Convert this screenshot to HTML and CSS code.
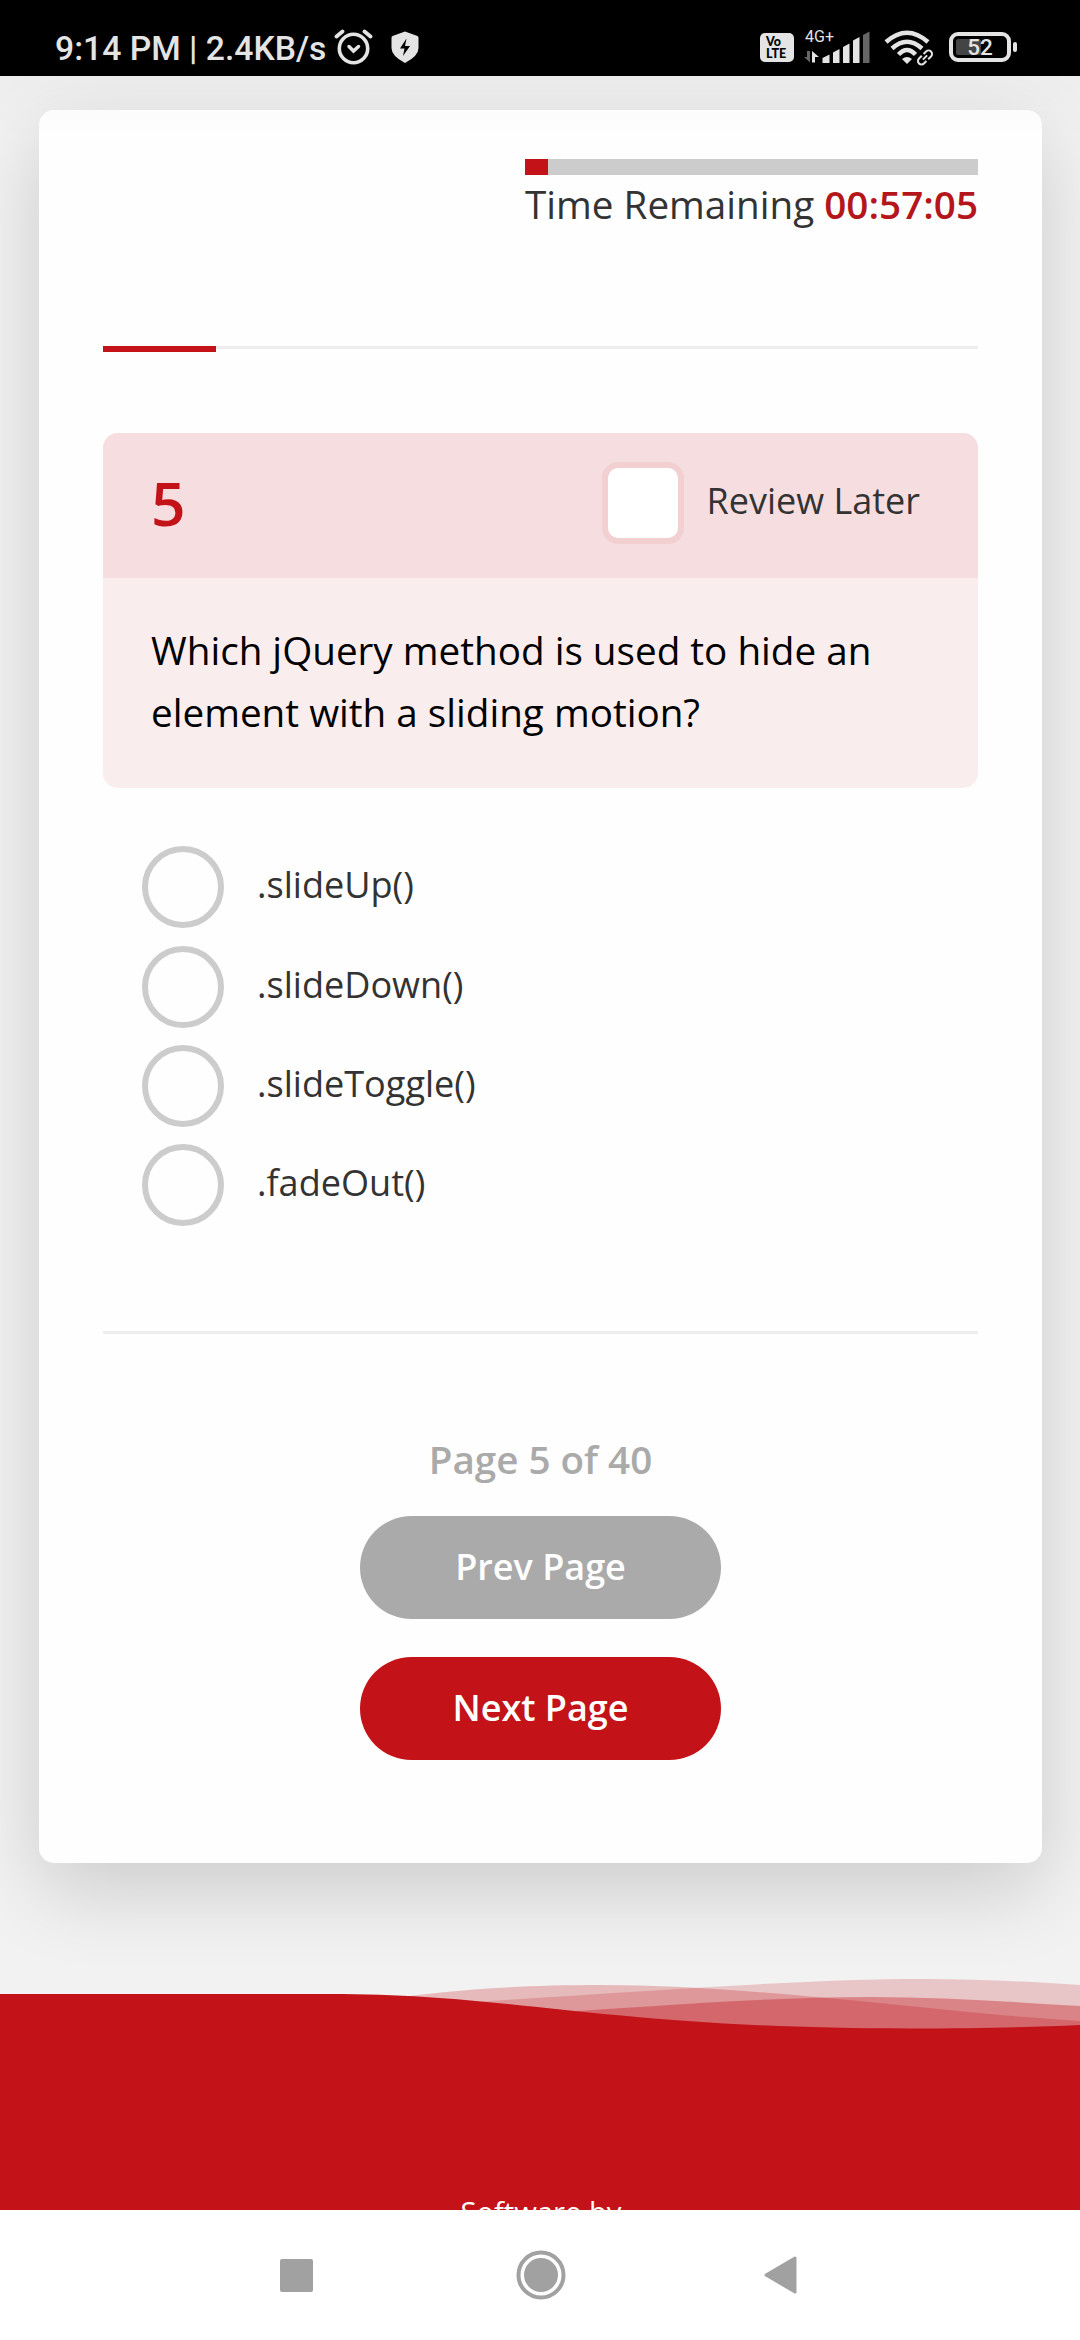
FILE: index.html
```html
<!DOCTYPE html>
<html lang="en">
<head>
<meta charset="utf-8">
<title>Quiz</title>
<link rel="stylesheet" href="styles.css">
</head>
<body>
<div class="screen">
  <header class="status">
    <span class="clock">9:14 PM | 2.4KB/s</span>
    <svg class="alarm" width="40" height="38" viewBox="0 0 40 38" fill="none" stroke="#e4e4e4" stroke-linecap="round">
      <circle cx="19.500" cy="19.500" r="14.200" stroke-width="3.600"/>
      <path d="M2.500 7.500L8.500 2.500M36.500 7.500L30.500 2.500" stroke-width="3.800"/>
      <path d="M15 17.500l4.500 4.500 5-4.500" stroke-width="3.500"/>
    </svg>
    <svg class="shield" width="28" height="33" viewBox="0 0 28 33">
      <path d="M14 .500L26.500 5Q27.500 5.500 27.500 7V17Q27.500 25 14 32Q.500 25 .500 17V7Q.500 5.500 1.500 5Z" fill="#e4e4e4"/>
      <path d="M15.500 7.500L9 17.500h4.500L12 25l7-10h-5Z" fill="#000"/>
    </svg>
    <span class="volte"><span>Vo</span><span>LTE</span></span>
    <span class="signal">
      <span class="net">4G+</span>
      <svg width="66" height="34" viewBox="0 0 66 34">
        <path d="M0 27l6 5.500V21H3v6Z" fill="#666"/>
        <path d="M8 21v11.500h3V27h4Z" fill="#e4e4e4"/>
        <path d="M18.500 33v-5l7-3.500V33ZM29 33V22.500l6.500-3.500V33ZM39 33V17l6.500-3.500V33ZM49 33V10.500L55.500 7V33Z" fill="#e4e4e4"/>
        <path d="M59 33V5l6.500-3.500V33Z" fill="#666"/>
      </svg>
    </span>
    <svg class="wifi" width="51" height="36" viewBox="0 0 51 36" fill="none" stroke="#e4e4e4">
      <path d="M2 12Q23-6.500 44 12" stroke-width="4.500"/>
      <path d="M8 18.500Q23 5 38 18.500" stroke-width="4.500"/>
      <path d="M14.500 24.500Q23 15.500 31.500 24.500" stroke-width="4.500"/>
      <path d="M18 29Q23 25 28 29L23 34Z" fill="#e4e4e4" stroke="none"/>
      <g transform="rotate(-45 41 27.500)">
        <rect x="30.500" y="22" width="21" height="11" rx="5" fill="#000" stroke="none"/>
        <path d="M40 24H36a3.500 3.500 0 0 0 0 7h3.500M42.500 24H46a3.500 3.500 0 0 1 0 7h-4M38 27.500h6" stroke-width="2"/>
      </g>
    </svg>
    <span class="battery"><span class="charge"></span><span class="pct">52</span></span>
    <span class="nub"></span>
  </header>

  <main class="page">
    <section class="card">
      <div class="timer">
        <div class="bar"><div class="fill"></div></div>
        <p>Time Remaining <b>00:57:05</b></p>
      </div>
      <div class="progress"><div class="done"></div></div>
      <div class="question">
        <div class="qhead">
          <span class="num">5</span>
          <span class="check"></span>
          <span class="later">Review Later</span>
        </div>
        <p class="qtext">Which jQuery method is used to hide an element with a sliding motion?</p>
      </div>
      <ul class="options">
        <li><i class="radio"></i><span>.slideUp()</span></li>
        <li><i class="radio"></i><span>.slideDown()</span></li>
        <li><i class="radio"></i><span>.slideToggle()</span></li>
        <li><i class="radio"></i><span>.fadeOut()</span></li>
      </ul>
      <div class="pager">
        <p>Page 5 of 40</p>
        <div class="btn prev">Prev Page</div>
        <div class="btn next">Next Page</div>
      </div>
    </section>
    <footer class="footer">
      <svg class="waves" width="1080" height="60" viewBox="0 0 1080 60" fill="#c31218">
        <path d="M380 30C440 21 510 15 600 15C760 15 930 42 1080 51V60H380Z" fill-opacity=".25"/>
        <path d="M440 34C610 24 790 9 925 9C980 9 1035 12 1080 15V60H440Z" fill-opacity=".2"/>
        <path d="M530 44C660 36 770 27 870 27C940 27 1010 32 1080 36V60H530Z" fill-opacity=".36"/>
        <path d="M0 24H330C520 24 600 58 910 58.500C980 58.500 1035 57 1080 55V60H0Z"/>
      </svg>
      <p>Software by</p>
    </footer>
  </main>

  <nav class="nav">
    <svg width="33" height="33" viewBox="0 0 33 33"><rect width="33" height="33" rx="2" fill="#a1a1a1"/></svg>
    <svg width="50" height="50" viewBox="0 0 50 50"><circle cx="25" cy="25" r="22.500" fill="none" stroke="#a1a1a1" stroke-width="4"/><circle cx="25" cy="25" r="17" fill="#a1a1a1"/></svg>
    <svg class="back" width="33" height="38" viewBox="0 0 33 38"><path d="M31 2V36L2 19Z" fill="#a1a1a1" stroke="#a1a1a1" stroke-width="3" stroke-linejoin="round"/></svg>
  </nav>
</div>
</body>
</html>
```
FILE: styles.css
```css
* { box-sizing: border-box; }
body { margin: 0; }
p, ul { margin: 0; padding: 0; }
svg { display: block; flex: none; }

.screen { width: 1080px; height: 2340px; display: flex; flex-direction: column; overflow: hidden; font-family: "Open Sans", sans-serif; color: #333; background: #fff; }

/* Status bar */
.status { height: 76px; flex: none; background: #000; color: #e4e4e4; display: flex; align-items: flex-start; padding-left: 55px; font-family: Roboto, sans-serif; }
.clock { width: 279px; font-size: 33.7px; font-weight: 500; line-height: 97px; white-space: nowrap; }
.alarm { margin-top: 29px; }
.shield { margin: 31px 0 0 17px; }
.volte { width: 34px; height: 29px; margin: 33px 10px 0 auto; padding: 3px 0 0 6px; border-radius: 5px; background: #e4e4e4; color: #000; font: 900 12.5px/12px Lato, sans-serif; display: flex; flex-direction: column; }
.signal { display: grid; margin: 30px 14px 0 0; }
.signal > * { grid-area: 1 / 1; }
.net { font-size: 16px; line-height: 13px; padding-left: 1px; }
.wifi { margin: 30px 14px 0 0; }
.battery { width: 62px; height: 30px; margin-top: 32px; border: 4px solid #e4e4e4; border-radius: 9px; display: grid; align-items: center; }
.battery > * { grid-area: 1 / 1; }
.charge { width: 25px; height: 16px; margin-left: 3px; border-radius: 2px; background: #444; }
.pct { font-size: 22.5px; font-weight: 500; line-height: 22px; text-align: center; }
.nub { width: 4px; height: 10px; margin: 42px 63px 0 2px; border-radius: 2px; background: #e4e4e4; }

/* Page */
.page { position: relative; height: 2134px; flex: none; background: #f2f2f2; overflow: hidden; padding-top: 34px; }
.page::before { content: ""; position: absolute; z-index: 1; inset: 0 0 auto 0; height: 64px; background: linear-gradient(rgba(0,0,0,.02), transparent); }
.card { width: 1003px; height: 1753px; margin-left: 39px; background: #fefefe; border-radius: 15px; box-shadow: 0 27px 82px rgba(0,0,0,.16); padding: 49px 64px 0; }

.timer { width: 453px; margin-left: auto; font-size: 38.65px; line-height: 58px; white-space: nowrap; }
.timer b { font-weight: 600; color: #b5161b; }
.bar { height: 16px; background: #ccc; }
.fill { width: 23px; height: 16px; background: #c31218; }

.progress { height: 3px; margin-top: 113px; background: #ededed; }
.done { width: 113px; height: 6px; background: #c31218; }

.question { margin-top: 84px; height: 355px; border-radius: 15px; overflow: hidden; background: #f9eded; }
.qhead { height: 145px; background: #f6dee0; display: flex; align-items: flex-start; padding: 0 58px 0 48px; }
.num { flex: 1; font-size: 60.5px; font-weight: 600; line-height: 139px; color: #c31218; }
.check { width: 82px; height: 82px; margin: 29px 22px 0 0; border: 6px solid #f2cfd1; border-radius: 16px; background: #fff; }
.later { font-size: 36px; line-height: 136px; white-space: nowrap; }
.qtext { padding: 41px 48px 0; font-size: 38.65px; line-height: 62px; color: #000; }

.options { list-style: none; margin: 58.2px 0 0 39px; display: flex; flex-direction: column; gap: 17.4px; }
.options li { height: 82px; display: flex; gap: 33px; font-size: 36.1px; line-height: 76px; }
.radio { width: 82px; height: 82px; border: 6px solid #ccc; border-radius: 50%; }

.pager { margin-top: 104.6px; border-top: 3px solid #ededed; padding-top: 95px; display: flex; flex-direction: column; align-items: center; font-weight: 600; }
.pager p { font-size: 38.6px; line-height: 60px; margin-bottom: 27px; color: #aaa; }
.btn { width: 361px; height: 103px; border-radius: 52px; font-size: 36px; line-height: 102px; text-align: center; color: #fff; }
.prev { background: #aaa; margin-bottom: 38px; }
.next { background: #c31218; }

/* Footer */
.footer { margin-top: 107px; color: #fff; text-align: center; }
.footer p { height: 300px; padding: 162px 0 0 2px; background: #c31218; font-size: 29.2px; line-height: 40px; }

/* System navigation */
.nav { height: 130px; flex: none; display: flex; align-items: center; gap: 203px; padding-left: 280px; background: #fff; }
.back { margin-left: -5px; }
```
